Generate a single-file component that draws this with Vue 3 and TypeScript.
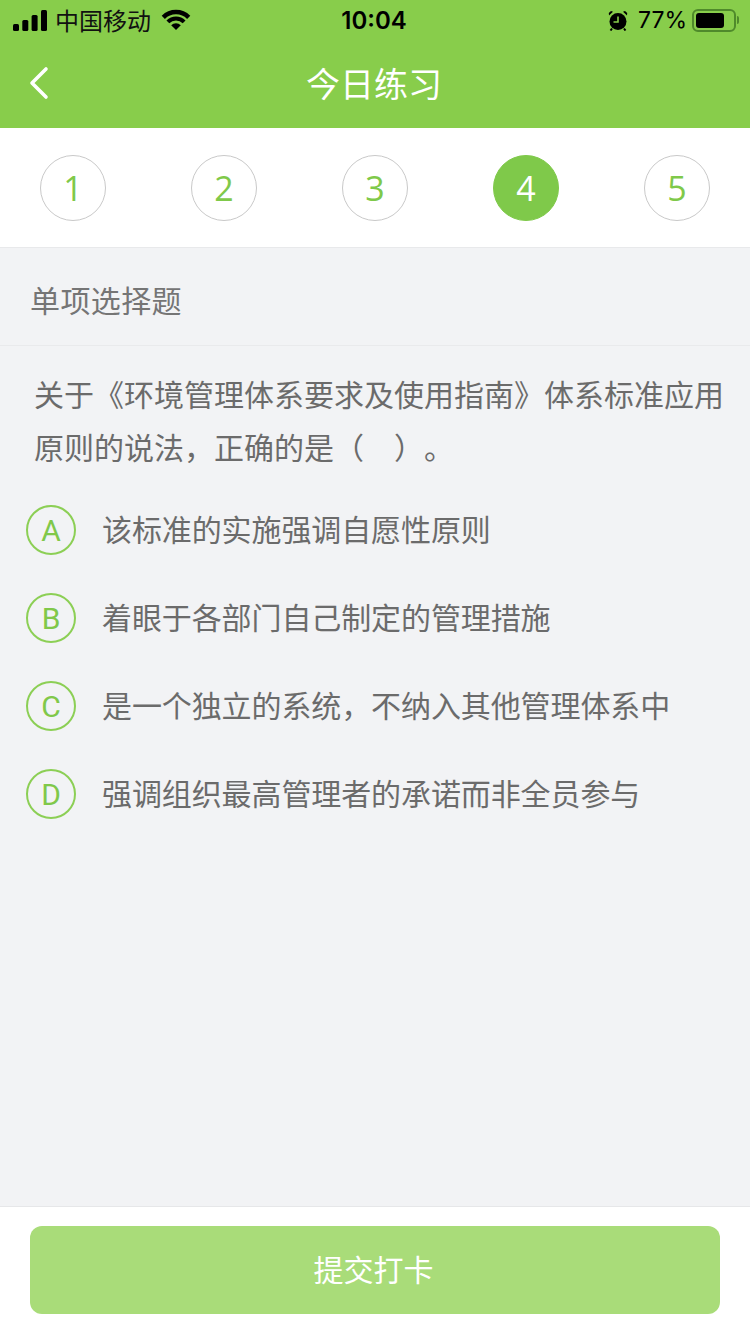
<script setup lang="ts">
const steps = [1, 2, 3, 4, 5]
const activeStep = 4
const options = [
  { key: 'A', text: '该标准的实施强调自愿性原则' },
  { key: 'B', text: '着眼于各部门自己制定的管理措施' },
  { key: 'C', text: '是一个独立的系统，不纳入其他管理体系中' },
  { key: 'D', text: '强调组织最高管理者的承诺而非全员参与' },
]
</script>

<template>
  <div class="page">
    <header class="top">
      <div class="status">
        <div class="status-left">
          <svg class="signal" width="34" height="21" viewBox="0 0 34 21">
            <rect x="0" y="14" width="6" height="7" rx="1.5" />
            <rect x="9.300" y="10" width="6" height="11" rx="1.5" />
            <rect x="18.600" y="5" width="6" height="16" rx="1.5" />
            <rect x="28" y="0" width="6" height="21" rx="1.5" />
          </svg>
          <span class="carrier">中国移动</span>
          <svg class="wifi" width="30" height="22" viewBox="0 0 30 22">
            <path d="M2.300 8.300A18 18 0 0 1 27.700 8.300" fill="none" stroke="#000" stroke-width="4.500" />
            <path d="M6.870 12.870A11.500 11.500 0 0 1 23.130 12.870" fill="none" stroke="#000" stroke-width="4" />
            <path d="M15 21 10.200 16.200A6.800 6.800 0 0 1 19.800 16.200Z" />
          </svg>
        </div>
        <div class="clock">10:04</div>
        <div class="status-right">
          <svg class="alarm" width="20" height="21" viewBox="0 0 20 21">
            <circle cx="10" cy="11.500" r="8.500" />
            <path d="M1 5.500 5 1.800 3 1 0.800 3zM19 5.500 15 1.800 17 1 19.200 3z" />
            <path d="M10 6.500V12H5.500" fill="none" stroke="#88cd4b" stroke-width="1.600" />
            <path d="M4 18.500 2.500 20.500M16 18.500 17.500 20.500" stroke="#000" stroke-width="2" />
          </svg>
          <span class="percent">77%</span>
          <div class="battery">
            <div class="battery-level"></div>
          </div>
          <div class="battery-cap"></div>
        </div>
      </div>
      <div class="nav">
        <svg class="back" width="22" height="34" viewBox="0 0 22 34">
          <path d="M18 3 4 17l14 14" fill="none" stroke="#fff" stroke-width="3.600" stroke-linecap="round" stroke-linejoin="round" />
        </svg>
        <h1 class="title">今日练习</h1>
      </div>
    </header>

    <nav class="steps">
      <div v-for="n in steps" :key="n" class="step" :class="{ active: n === activeStep }">{{ n }}</div>
    </nav>

    <main class="body">
      <div class="type">单项选择题</div>
      <p class="question">关于《环境管理体系要求及使用指南》体系标准应用原则的说法，正确的是（&emsp;）。</p>
      <ul class="options">
        <li v-for="o in options" :key="o.key" class="option">
          <span class="letter">{{ o.key }}</span>
          <span class="option-text">{{ o.text }}</span>
        </li>
      </ul>
    </main>

    <footer class="bottom">
      <button class="submit" type="button">提交打卡</button>
    </footer>
  </div>
</template>

<style scoped>
.page {
  width: 750px;
  height: 1334px;
  display: flex;
  flex-direction: column;
  background: #f2f3f5;
  font-family: "Liberation Sans", "Noto Sans CJK SC", sans-serif;
  text-spacing-trim: space-all;
  overflow: hidden;
}
.top {
  height: 128px;
  flex: none;
  background: #88cd4b;
}
.status {
  height: 40px;
  display: flex;
  align-items: center;
  justify-content: space-between;
  position: relative;
  padding: 0 11px 0 13px;
  color: #000;
}
.status-left,
.status-right {
  display: flex;
  align-items: center;
}
.signal {
  margin-right: 8px;
}
.carrier {
  margin-bottom: 2px;
  font-size: 24px;
  color: #111;
}
.wifi {
  margin-left: 10px;
}
.clock {
  position: absolute;
  left: 0;
  right: 0;
  padding-right: 2px;
  text-align: center;
  font-family: Inter, "Liberation Sans", sans-serif;
  font-size: 24px;
  font-weight: 600;
}
.alarm {
  margin-right: 10px;
}
.percent {
  font-family: Inter, "Liberation Sans", sans-serif;
  font-size: 23px;
}
.battery {
  width: 44px;
  height: 23px;
  margin-left: 5px;
  padding: 2px;
  box-sizing: border-box;
  border: 2px solid #4f8a2b;
  border-radius: 6px;
}
.battery-level {
  width: 78%;
  height: 100%;
  background: #000;
  border-radius: 3px;
}
.battery-cap {
  width: 2px;
  height: 8px;
  margin-left: 1px;
  background: #4f8a2b;
  border-radius: 0 2px 2px 0;
}
.nav {
  height: 88px;
  display: flex;
  align-items: center;
  justify-content: center;
  position: relative;
}
.back {
  position: absolute;
  left: 28px;
  top: 26px;
}
.title {
  margin: 0 2px 4px 0;
  font-size: 34px;
  font-weight: 400;
  color: #fff;
}
.steps {
  height: 120px;
  flex: none;
  box-sizing: border-box;
  padding: 0 40px;
  display: flex;
  align-items: center;
  justify-content: space-between;
  background: #fff;
  border-bottom: 1px solid #e8e9eb;
}
.step {
  width: 66px;
  height: 66px;
  box-sizing: border-box;
  display: flex;
  align-items: center;
  justify-content: center;
  border: 1px solid #c9c9c9;
  border-radius: 50%;
  font-family: "Open Sans", "Liberation Sans", sans-serif;
  font-size: 34px;
  color: #7fc94a;
}
.step.active {
  background: #7fc94a;
  border-color: #7fc94a;
  color: #fff;
}
.body {
  flex: 1;
  min-height: 0;
}
.type {
  height: 98px;
  box-sizing: border-box;
  padding: 5px 30px 0;
  display: flex;
  align-items: center;
  border-bottom: 1px solid #e9eaec;
  font-size: 30px;
  letter-spacing: 0.4px;
  color: #757575;
}
.question {
  margin: 23px 0 0;
  padding: 0 20px 0 34px;
  font-size: 30px;
  line-height: 53px;
  color: #6b6b6b;
}
.options {
  margin: 11px 0 0;
  padding: 0 0 0 26px;
  list-style: none;
}
.option {
  height: 88px;
  display: flex;
  align-items: center;
}
.letter {
  width: 50px;
  height: 50px;
  box-sizing: border-box;
  display: flex;
  align-items: center;
  justify-content: center;
  flex: none;
  border: 2px solid #8ccf55;
  border-radius: 50%;
  font-family: Roboto, "Liberation Sans", sans-serif;
  font-size: 30px;
  color: #80c84a;
}
.option-text {
  margin: 0 0 4px 26px;
  font-size: 30px;
  letter-spacing: -0.1px;
  color: #6b6b6b;
}
.bottom {
  height: 128px;
  flex: none;
  box-sizing: border-box;
  padding: 19px 30px 0;
  background: #fff;
  border-top: 1px solid #e6e7e9;
}
.submit {
  display: block;
  width: 100%;
  height: 88px;
  padding: 0 3px 4px 0;
  border: none;
  border-radius: 12px;
  background: #a9dc79;
  font-family: inherit;
  font-size: 30px;
  color: #fff;
}
</style>
